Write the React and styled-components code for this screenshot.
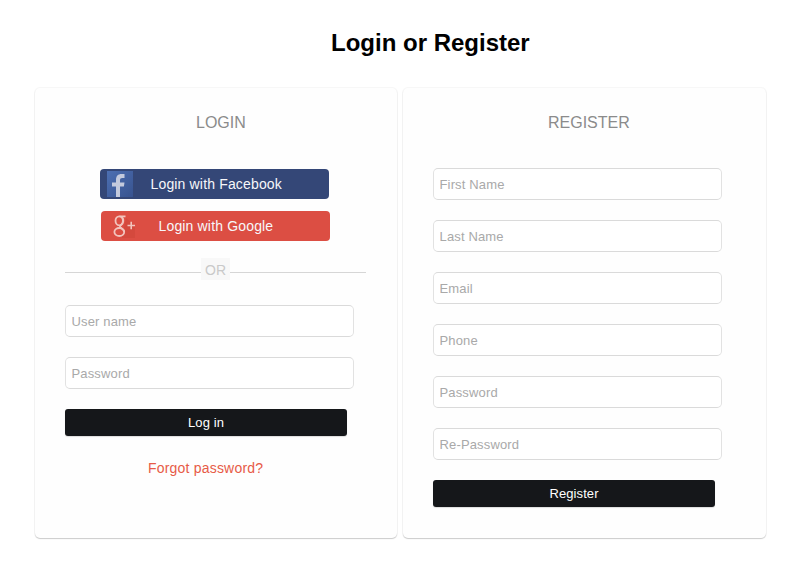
import React from 'react';
import styled, { createGlobalStyle } from 'styled-components';

const GlobalStyle = createGlobalStyle`
	* {
		box-sizing: border-box;
	}

	body {
		margin: 0;
		background: #fff;
		font-family: 'Liberation Sans', Arial, sans-serif;
	}
`;

const Page = styled.main`
	width: 799px;
	height: 566px;
	overflow: hidden;
`;

const Title = styled.h1`
	margin: 0;
	padding: 29px 0 0 331px;
	height: 88px;
	font-size: 24px;
	line-height: 28px;
	font-weight: 700;
	color: #000;
	white-space: nowrap;
`;

const Panels = styled.div`
	display: flex;
	gap: 6px;
	padding-left: 35px;
`;

const Panel = styled.section`
	width: ${({ $width }) => $width}px;
	height: 450px;
	padding: 25px 30px 0;
	border-radius: 5px;
	background: #fefefe;
	box-shadow: 0 1px 1px #cbcbcb, 0 0 0 1px #f7f7f7;
`;

const PanelTitle = styled.h2`
	margin: 0;
	height: ${({ $height }) => $height}px;
	padding-left: ${({ $indent }) => $indent}px;
	font-size: 16px;
	line-height: 19px;
	font-weight: 400;
	color: #8b8b8b;
`;

const Fields = styled.div`
	display: flex;
	flex-direction: column;
	gap: 20px;
`;

const Input = styled.input`
	width: 289px;
	height: 32px;
	padding: 1px 5px 0 5.5px;
	border: 1px solid #dadada;
	border-left-color: #e2e2e2;
	border-right-color: #e2e2e2;
	border-radius: 5px;
	outline: none;
	background: #fff;
	font-family: inherit;
	font-size: 13px;
	letter-spacing: 0.15px;

	&::placeholder {
		color: #a9a9a9;
		opacity: 1;
	}
`;

const Submit = styled.button`
	width: 282px;
	height: 27px;
	padding: 0;
	border: 0;
	border-radius: 3px;
	background: #15171a;
	box-shadow: 0 1px 1px #ddd;
	color: #fff;
	font-family: inherit;
	font-size: 13px;
	line-height: 27px;
	letter-spacing: 0.1px;
`;

const Social = styled.a`
	display: flex;
	align-items: center;
	width: 229px;
	height: 30px;
	margin: 0 0 12px ${({ $offset }) => $offset}px;
	padding-left: ${({ $inset }) => $inset}px;
	gap: ${({ $gap }) => $gap}px;
	border-radius: 4px;
	background: ${({ $color }) => $color};
	color: #f7f7fa;
	font-size: 14px;
	line-height: 30px;
	letter-spacing: 0.16px;
	white-space: nowrap;
`;

const Divider = styled.div`
	display: flex;
	align-items: center;
	width: 301px;
	height: 22px;
	margin: 17px 0 25px;

	&::before,
	&::after {
		content: '';
		height: 1px;
		margin-top: 6px;
		background: #d6d6d6;
	}

	&::before {
		width: 136px;
	}

	&::after {
		flex: 1;
	}
`;

const Or = styled.span`
	width: 29px;
	height: 22px;
	background: #f8f8f8;
	color: #c9c9c9;
	font-size: 14px;
	line-height: 25px;
	text-align: center;
`;

const Forgot = styled.a`
	display: block;
	margin: 4px 0 0 83px;
	font-size: 14px;
	line-height: 16px;
	letter-spacing: 0.2px;
	color: #e75b47;
`;

const FacebookIcon = () => (
	<svg width="26" height="26" viewBox="0 0 26 26">
		<defs>
			<linearGradient id="fb" x1="0" y1="0" x2="1" y2="1">
				<stop offset="0" stopColor="#4c6fb2" />
				<stop offset="1" stopColor="#38538f" />
			</linearGradient>
		</defs>
		<rect width="26" height="26" fill="url(#fb)" />
		<path
			d="M9 26V15.500H5v-4h4V9c0-4 2-6 5.500-6h3v4h-2.300c-1.500 0-2.200.7-2.200 2.200v2.300h4.500l-.6 4H13V26z"
			fill="#c3cadd"
		/>
	</svg>
);

const GoogleIcon = () => (
	<svg width="23" height="24" viewBox="0 0 23 24">
		<path d="M13 4l9 8v12H9z" fill="#cf463b" opacity=".65" />
		<g fill="none" stroke="#f2c4bd" strokeWidth="1.800">
			<ellipse cx="6.200" cy="6.800" rx="3.700" ry="4.500" />
			<path d="M6.500 2.300h6M9 3c2.200 2.700 1.500 6-.7 7.800-1.800 1.500-2 2.200.4 3.700 1.200.8 2.500 1.800 2.500 3.500" />
			<ellipse cx="6.300" cy="18" rx="4.900" ry="4" />
			<path d="M14.500 11.500h7.500M18.200 7.700v7.600" strokeWidth="1.600" />
		</g>
	</svg>
);

const registerFields = [
	['First Name', 'text'],
	['Last Name', 'text'],
	['Email', 'email'],
	['Phone', 'tel'],
	['Password', 'password'],
	['Re-Password', 'password'],
];

const App = () => {
	return (
		<Page>
			<GlobalStyle />
			<Title>Login or Register</Title>
			<Panels>
				<Panel $width={362}>
					<PanelTitle $height={56} $indent={131}>LOGIN</PanelTitle>
					<Social $color="#344777" $offset={35} $inset={7} $gap={17.5}>
						<FacebookIcon />
						Login with Facebook
					</Social>
					<Social $color="#dc4e43" $offset={36} $inset={12} $gap={22.5}>
						<GoogleIcon />
						Login with Google
					</Social>
					<Divider>
						<Or>OR</Or>
					</Divider>
					<Fields>
						<Input placeholder="User name" />
						<Input type="password" placeholder="Password" />
						<Submit>Log in</Submit>
						<Forgot>Forgot password?</Forgot>
					</Fields>
				</Panel>
				<Panel $width={363}>
					<PanelTitle $height={55} $indent={115}>REGISTER</PanelTitle>
					<Fields>
						{registerFields.map(([label, type]) => (
							<Input key={label} type={type} placeholder={label} />
						))}
						<Submit>Register</Submit>
					</Fields>
				</Panel>
			</Panels>
		</Page>
	);
};

export default App;
